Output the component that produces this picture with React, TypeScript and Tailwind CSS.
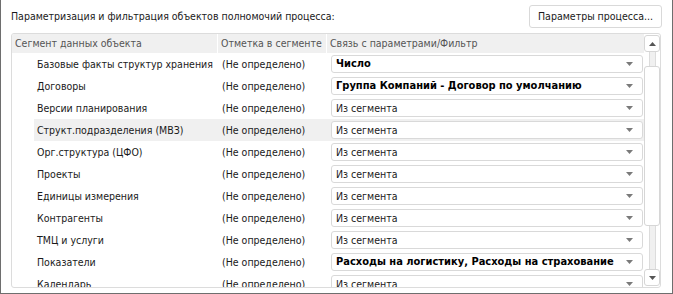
import React from "react";

const rows: { label: string; mark: string; value: string; bold?: boolean; hl?: boolean }[] = [
  { label: "Базовые факты структур хранения", mark: "(Не определено)", value: "Число", bold: true },
  { label: "Договоры", mark: "(Не определено)", value: "Группа Компаний - Договор по умолчанию", bold: true },
  { label: "Версии планирования", mark: "(Не определено)", value: "Из сегмента" },
  { label: "Структ.подразделения (МВЗ)", mark: "(Не определено)", value: "Из сегмента", hl: true },
  { label: "Орг.структура (ЦФО)", mark: "(Не определено)", value: "Из сегмента" },
  { label: "Проекты", mark: "(Не определено)", value: "Из сегмента" },
  { label: "Единицы измерения", mark: "(Не определено)", value: "Из сегмента" },
  { label: "Контрагенты", mark: "(Не определено)", value: "Из сегмента" },
  { label: "ТМЦ и услуги", mark: "(Не определено)", value: "Из сегмента" },
  { label: "Показатели", mark: "(Не определено)", value: "Расходы на логистику, Расходы на страхование", bold: true },
  { label: "Календарь", mark: "(Не определено)", value: "Из сегмента" },
];

function Down({ color = "#7a7a7a" }: { color?: string }) {
  return (
    <svg width="7" height="4" viewBox="0 0 7 4" className="shrink-0">
      <path d="M0 0H7L3.5 4Z" fill={color} />
    </svg>
  );
}

function Up({ color = "#555" }: { color?: string }) {
  return (
    <svg width="7" height="4" viewBox="0 0 7 4" className="shrink-0">
      <path d="M0 4H7L3.5 0Z" fill={color} />
    </svg>
  );
}

export default function App() {
  return (
    <div className="w-[673px] h-[294px] bg-white border-x border-b border-[#6e6e6e] flex flex-col overflow-hidden font-['DejaVu_Sans_Condensed','Liberation_Sans',sans-serif] text-[10.5px] text-[#1a1a1a]">
      <div className="flex items-center justify-between pl-[10px] pr-[10px] pt-[5px] h-[28px]">
        <span className="whitespace-nowrap">Параметризация и фильтрация объектов полномочий процесса:</span>
        <div className="h-[23px] w-[133px] flex items-center justify-center border border-[#d9d9d9] rounded-[3px] bg-white whitespace-nowrap">
          Параметры процесса...
        </div>
      </div>
      <div className="ml-[10px] mt-[5px] w-[650px] h-[255px] border border-[#dcdcdc] rounded-[3px] flex overflow-hidden">
        <div className="flex-1 flex flex-col overflow-hidden">
          <div className="h-[19px] shrink-0 flex bg-[#f0f0f0] text-[#555] whitespace-nowrap">
            <div className="w-[206px] shrink-0 pl-[3px] flex items-center border-r border-white">Сегмент данных объекта</div>
            <div className="w-[109px] shrink-0 pl-[3px] flex items-center border-r border-white">Отметка в сегменте</div>
            <div className="flex-1 pl-[3px] flex items-center">Связь с параметрами/Фильтр</div>
          </div>
          {rows.map((r, i) => (
            <div key={i} className="h-[22px] shrink-0 flex">
              <div className="w-[22px] shrink-0" />
              <div className={`flex-1 flex ${r.hl ? "bg-[#f0f0f0]" : ""}`}>
                <div className="w-[185px] shrink-0 pl-[3px] pt-[1px] flex items-center whitespace-nowrap">{r.label}</div>
                <div className="w-[109px] shrink-0 pl-[3px] pt-[1px] flex items-center whitespace-nowrap">{r.mark}</div>
                <div className="flex-1 flex items-center pl-[3px] pr-[1px]">
                  <div className="w-full h-[18px] bg-white border border-[#d9d9d9] rounded-[3px] flex items-center justify-between pl-[4px] pr-[9px]">
                    <span className={`whitespace-nowrap pt-[1px] ${r.bold ? "font-bold text-black text-[11px]" : ""}`}>{r.value}</span>
                    <Down />
                  </div>
                </div>
              </div>
            </div>
          ))}
        </div>
        <div className="w-[16px] shrink-0 flex flex-col items-center pt-[1px] pb-[1px]">
          <div className="w-[16px] h-[17px] shrink-0 border border-[#d6d6d6] rounded-[3px] bg-white flex items-center justify-center">
            <Up />
          </div>
          <div className="w-[7px] h-[14px] shrink-0 bg-[#f0f0f0] border-x border-[#dcdcdc]" />
          <div className="w-[16px] h-[160px] shrink-0 border border-[#d6d6d6] rounded-[3px] bg-white" />
          <div className="w-[7px] flex-1 bg-[#f0f0f0] border-x border-[#dcdcdc]" />
          <div className="w-[16px] h-[17px] shrink-0 border border-[#d6d6d6] rounded-[3px] bg-white flex items-center justify-center">
            <Down color="#555" />
          </div>
        </div>
      </div>
    </div>
  );
}
